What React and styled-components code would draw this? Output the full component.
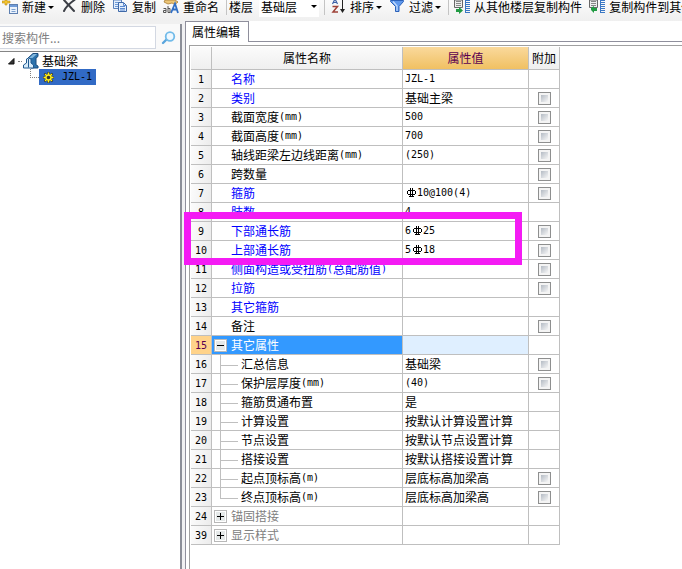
import React from "react";
import styled, { createGlobalStyle, css } from "styled-components";

const LINE = "#bfbfbf";
const FRAME = "#8f8f9c";

const GlobalStyle = createGlobalStyle`
  * { box-sizing: border-box; }
  body {
    margin: 0;
    background: #fff;
    color: #000;
    font: 12px/18px "Noto Sans CJK SC", sans-serif;
  }
  button, input, select { font: inherit; color: inherit; }
`;

const Page = styled.div`
  display: flex;
  flex-direction: column;
  height: 100vh;
  overflow: hidden;
`;

/* ---------- toolbar ---------- */

const Toolbar = styled.header`
  display: flex;
  align-items: flex-start;
  flex: none;
  height: 21px;
  padding-left: 2px;
  overflow: hidden;
  white-space: nowrap;
  background: linear-gradient(#fbfbfb, #efefef);
`;

const ToolButton = styled.button`
  display: flex;
  align-items: center;
  flex: none;
  gap: 4px;
  height: 14px;
  margin: 0 7px 0 0;
  padding: 0;
  border: 0;
  background: none;
  line-height: 14px;

  svg { display: block; flex: none; }
`;

const Arrow = styled.span`
  width: 6px;
  margin-left: -2px;
  border: solid transparent;
  border-width: 3px 3px 0;
  border-top-color: #000;
`;

const Divider = styled.span`
  flex: none;
  width: 1px;
  height: 15px;
  margin-right: ${(p) => (p.$tight ? 2 : 5)}px;
  background: #c4c4c4;
`;

const FloorLabel = styled.label`
  flex: none;
  margin-right: 6px;
  line-height: 14px;
`;

const FloorBox = styled.span`
  display: flex;
  align-items: center;
  flex: none;
  width: 60px;
  height: 17px;
  margin-right: 5px;
  padding: 0 2px 4px 2px;
  background: #fff;
`;

const FloorSelect = styled.select`
  appearance: none;
  flex: 1;
  min-width: 0;
  height: 14px;
  padding: 0;
  border: 0;
  background: none;
  line-height: 14px;
`;

/* ---------- component tree ---------- */

const Workspace = styled.div`
  display: flex;
  flex: 1;
  min-height: 0;
`;

const Sidebar = styled.aside`
  flex: none;
  width: 182px;
  padding-top: 3px;
  background: #f0f0f0;
`;

const SidebarFrame = styled.div`
  height: 100%;
  border-right: 2px solid #8b8e98;
  background: #fff;
`;

const SearchBar = styled.form`
  display: flex;
  align-items: center;
  height: 28px;
  border-bottom: 1px solid #858585;
  background: #f9f9f9;
`;

const SearchInput = styled.input`
  width: 156px;
  height: 23px;
  padding: 0 2px;
  border: 1px solid #d3d8e2;
  border-left: 0;
  background: #fff;
  outline: 0;

  &::placeholder { color: #808080; opacity: 1; }
`;

const SearchButton = styled.button`
  display: flex;
  margin-left: 5px;
  padding: 0;
  border: 0;
  background: none;
`;

const Tree = styled.ul`
  margin: 0;
  padding: 1px 0 0;
  list-style: none;
`;

const TreeRow = styled.li`
  display: flex;
  align-items: center;
  height: 16px;
  padding-left: ${(p) => (p.$child ? 30 : 8)}px;
  line-height: 16px;
`;

const RootName = styled.span`
  margin-left: 3px;
`;

const Dots = styled.span`
  width: 4px;
  margin: 0 1px 0 3px;
  border-top: 1px dotted #808080;
`;

const Elbow = styled.span`
  align-self: flex-start;
  width: 9px;
  height: 9px;
  border: dotted #808080;
  border-width: 0 0 1px 1px;
`;

const Leaf = styled.span`
  display: flex;
  align-items: center;
  gap: 8px;
  height: 16px;
  padding: 0 4px;
  background: #316ac5;
`;

/* ---------- property editor ---------- */

const Main = styled.main`
  display: flex;
  flex: 1;
  min-width: 0;
  padding-left: 3px;
  background: #f0f0f2;
`;

const Panel = styled.section`
  display: flex;
  flex-direction: column;
  flex: 1;
  min-width: 0;
  border-left: 1px solid ${FRAME};
  background: #fff;
`;

const Tabs = styled.div`
  display: flex;
  flex: none;
  height: 21px;

  &::after {
    content: "";
    flex: 1;
    border-bottom: 1px solid ${FRAME};
  }
`;

const Tab = styled.button`
  padding: 0 8px 0 6px;
  border: solid ${FRAME};
  border-width: 1px 1px 0 0;
  background: #fff;
`;

const Sheet = styled.div`
  flex: 1;
  margin: 3px 0 0 3px;
  padding: 1px 0 0 1px;
  border: solid #a0a0a0;
  border-width: 1px 0 0 1px;
`;

const TableArea = styled.div`
  position: relative;
`;

const Table = styled.table`
  width: 369px;
  border-spacing: 0;
  table-layout: fixed;
  line-height: 16px;
`;

const Col = styled.col`
  width: ${(p) => p.$w}px;
`;

const cell = css`
  padding: 0;
  border: solid ${LINE};
  border-width: 0 1px 1px 0;
  font-weight: 400;
  vertical-align: middle;
  white-space: nowrap;
`;

const HeadCell = styled.th`
  ${cell}
  height: 23px;
  background: ${(p) => (p.$active ? "linear-gradient(#fad99c, #f0c062)" : "linear-gradient(#fbfbfb, #efefef)")};
  color: ${(p) => (p.$active ? "#5a0050" : "#000")};
`;

const NumberCell = styled.th`
  ${cell}
  height: 19px;
  background: ${(p) => (p.$active ? "#ffd38a" : "linear-gradient(100deg, #fcfcfc, #ececec)")};
  color: ${(p) => (p.$active ? "#5a0050" : "#000")};
`;

const tones = { blue: "#0000ff", gray: "#808080", white: "#ffffff", black: "#000000" };

const NameCell = styled.td`
  ${cell}
  background: ${(p) => (p.$active ? "#3399ff" : "#fff")};
  color: ${(p) => tones[p.$tone]};
`;

const ValueCell = styled.td`
  ${cell}
  padding-left: 2px;
  background: ${(p) => (p.$active ? "#dfefff" : "#fff")};
`;

const CheckCell = styled.td`
  ${cell}
  text-align: center;
`;

const NameLine = styled.div`
  display: flex;
  align-items: center;
  height: 18px;
`;

const Slot = styled.span`
  display: flex;
  flex: none;
  width: 19px;
  padding-left: 2px;
`;

const Guide = styled.span`
  display: flex;
  flex-direction: column;
  flex: none;
  width: 18px;
  height: 18px;
  margin: 0 3px 0 8px;

  &::before {
    content: "";
    height: 10px;
    border: solid ${LINE};
    border-width: 0 0 1px 1px;
  }
  &::after {
    content: "";
    flex: 1;
    border-left: ${(p) => (p.$last ? 0 : 1)}px solid ${LINE};
  }
`;

const Expander = styled.button`
  display: flex;
  padding: 0;
  border: 0;
  background: none;
`;

const Check = styled.input`
  appearance: none;
  display: block;
  width: 13px;
  height: 13px;
  margin: 0 auto;
  padding: 2px;
  border: 1px solid #8e8f8f;
  background: linear-gradient(135deg, #b4bbc4, #f6f6f6) content-box, #f4f4f4;
`;

const ValueLine = styled.div`
  display: flex;
  align-items: center;
  height: 18px;
`;

const Latin = styled.span`
  display: inline-block;
  font-family: "DejaVu Sans Mono", monospace;
  font-size: 10px;
  line-height: 16px;
  vertical-align: middle;
`;

const Marker = styled.div`
  position: absolute;
  top: 165px;
  left: -7px;
  width: 338px;
  height: 53px;
  border: 7px solid #f41bf4;
  pointer-events: none;
`;

/* ---------- icons ---------- */

const NewIcon = () => (
  <svg width="16" height="14" viewBox="0 0 16 14" aria-hidden="true">
    <path d="M3 0h2v1h3v2H5v2H3V3H0V1h3z" fill="#f5c62e" stroke="#b98a18" strokeWidth=".6" />
    <rect x="7.500" y="4.500" width="8" height="9" fill="#eaf2fc" stroke="#5d7fb0" />
    <path d="M8 5h7v2H8z" fill="#6f9bd8" />
    <path d="M9.500 9.500h4M9.500 11.500h4" stroke="#7ca0cf" />
  </svg>
);
const DeleteIcon = () => (
  <svg width="16" height="14" viewBox="0 0 16 14" aria-hidden="true">
    <path d="M3 0L13 11M13.500 0C9 3 5 7 3 11" fill="none" stroke="#3d4047" strokeWidth="2" strokeLinecap="round" />
  </svg>
);
const CopyIcon = () => (
  <svg width="16" height="14" viewBox="0 0 16 14" aria-hidden="true">
    <path d="M1.500 0v8.500h8V0z" fill="#e4effc" stroke="#5c83bc" />
    <path d="M3 2.500h4M3 4.500h4M3 6.500h3" stroke="#6f9bd8" />
    <path d="M6.500 2.500h5l3 3v6h-8z" fill="#e4effc" stroke="#3f69a8" />
    <path d="M8 6.500h5M8 8.500h5M8 10h5M11.500 2.500v3h3" stroke="#5c8ad0" fill="none" />
  </svg>
);
const RenameIcon = () => (
  <svg width="16" height="14" viewBox="0 0 16 14" aria-hidden="true">
    <path d="M2 0h10l3 2-3 2.500-3-1.500-4 1-4-2z" fill="#ecc678" stroke="#a77b33" strokeWidth=".8" />
    <path d="M8 13l4-9.500 3 9.500M9.500 9.500h5" fill="none" stroke="#2f6ec4" strokeWidth="1.800" />
    <path d="M.5 8.500h2.500v4H.5v-2H3M5 6v6.500h2v-4H5" fill="none" stroke="#555" />
  </svg>
);
const SortIcon = () => (
  <svg width="16" height="14" viewBox="0 0 16 14" aria-hidden="true">
    <path d="M2.500 4l2-4h1l2 4M3.500 2.500h3" fill="none" stroke="#3e62a8" strokeWidth="1.200" />
    <path d="M2.500 6.500h5L3 12H8" fill="none" stroke="#9e4238" strokeWidth="1.500" />
    <path d="M12.500 0v11" stroke="#222" />
    <path d="M10 9h5L12.500 13z" fill="#222" />
  </svg>
);
const FilterIcon = () => (
  <svg width="16" height="14" viewBox="0 0 16 14" aria-hidden="true">
    <path d="M1.500 .5h13v1L10 6.500v5H6.500v-5L1.500 1.500z" fill="#5f98ec" stroke="#2c62b9" />
    <path d="M4 1.500L8 6v5" fill="none" stroke="#c7defc" strokeWidth="1.200" />
  </svg>
);
const FloorCopyIcon = ({ back }) => (
  <svg width="16" height="14" viewBox="0 0 16 14" aria-hidden="true">
    <path d="M.5 0v7.500h8V0z" fill="#eee" stroke="#686868" />
    <path d="M2 1.500h5M2 3.500h5M2 5.500h5" stroke="#888" />
    <path d="M11.500 0v13M11 .5h5M11 2.500h5M11 4.500h5M11 6.500h5M11 8.500h5M11 10.500h5M11 12.500h5" stroke="#3b78c4" />
    <path d={back ? "M2 8l3-2v2h3v3H5v2L2 10z" : "M2 9h3V7l4 3.500L5 14V12H2z"} fill="#219b43" />
  </svg>
);
const SearchIcon = () => (
  <svg width="15" height="14" viewBox="0 0 15 14" aria-hidden="true">
    <path d="M5.500 8.500L2 12" stroke="#5ba6dd" strokeWidth="2.400" strokeLinecap="round" />
    <circle cx="9" cy="5.500" r="4.300" fill="#eef8ff" stroke="#72bbe9" strokeWidth="1.800" />
  </svg>
);
const OpenIcon = () => (
  <svg width="7" height="7" viewBox="0 0 7 7" aria-hidden="true">
    <path d="M6 .5V6H.5z" fill="#333" stroke="#111" />
  </svg>
);
const BeamIcon = () => (
  <svg width="16" height="16" viewBox="0 0 16 16" aria-hidden="true">
    <path d="M5 5l5-4.500h5v3L13 5v7l2 1v2H8z" fill="#2c72ac" stroke="#1b4b7c" />
    <path d="M6 5l4.500-4H14L9.500 5z" fill="#83b8df" />
    <path d="M.5 15v-3L3.500 10V6l2-1 2.500 1v4l2.500 2v3z" fill="#d8ecfa" stroke="#215a90" />
    <path d="M5.500 6v8.500" stroke="#215a90" />
  </svg>
);
const GearIcon = () => (
  <svg width="11" height="11" viewBox="0 0 11 11" aria-hidden="true">
    <path d="M5.500 0v11M0 5.500h11M1.500 1.500l8 8M9.500 1.500l-8 8" stroke="#222" strokeWidth="2.200" />
    <path d="M5.500 .5v10M.5 5.500h10M2 2l7 7M9 2L2 9" stroke="#ffee18" strokeWidth="1.400" />
    <circle cx="5.500" cy="5.500" r="2.500" fill="#333" stroke="#ffee18" strokeWidth="1.400" />
  </svg>
);
const ToggleIcon = ({ open }) => (
  <svg width="13" height="13" viewBox="0 0 13 13" aria-hidden="true">
    <rect x=".5" y=".5" width="12" height="12" fill="#fff" stroke="#b8b8b8" />
    <rect x="2" y="2" width="9" height="9" fill="#e5e9e9" />
    <path d={open ? "M3 6.500h7" : "M3 6.500h7M6.500 3v7"} stroke="#000" />
  </svg>
);
const RebarIcon = () => (
  <svg width="12" height="10" viewBox="0 0 12 10" role="img" aria-label="HRB400">
    <path d="M5.500 0v9M7.500 0v9M3 2.500h7M3 6.500h7M2.500 3v3M10.500 3v3M4 8.500h5" fill="none" stroke="#000" />
  </svg>
);

/* ---------- data ---------- */

const rows = [
  { n: 1, name: "名称", tone: "blue", value: "JZL-1" },
  { n: 2, name: "类别", tone: "blue", value: "基础主梁", check: true },
  { n: 3, name: "截面宽度(mm)", value: "500", check: true },
  { n: 4, name: "截面高度(mm)", value: "700", check: true },
  { n: 5, name: "轴线距梁左边线距离(mm)", value: "(250)", check: true },
  { n: 6, name: "跨数量", value: "", check: true },
  { n: 7, name: "箍筋", tone: "blue", value: "#10@100(4)", check: true },
  { n: 8, name: "肢数", tone: "blue", value: "4" },
  { n: 9, name: "下部通长筋", tone: "blue", value: "6#25", check: true },
  { n: 10, name: "上部通长筋", tone: "blue", value: "5#18", check: true },
  { n: 11, name: "侧面构造或受扭筋(总配筋值)", tone: "blue", value: "", check: true },
  { n: 12, name: "拉筋", tone: "blue", value: "", check: true },
  { n: 13, name: "其它箍筋", tone: "blue", value: "" },
  { n: 14, name: "备注", value: "", check: true },
  { n: 15, name: "其它属性", tone: "white", value: "", group: "open", active: true },
  { n: 16, name: "汇总信息", value: "基础梁", child: true, check: true },
  { n: 17, name: "保护层厚度(mm)", value: "(40)", child: true, check: true },
  { n: 18, name: "箍筋贯通布置", value: "是", child: true },
  { n: 19, name: "计算设置", value: "按默认计算设置计算", child: true },
  { n: 20, name: "节点设置", value: "按默认节点设置计算", child: true },
  { n: 21, name: "搭接设置", value: "按默认搭接设置计算", child: true },
  { n: 22, name: "起点顶标高(m)", value: "层底标高加梁高", child: true, check: true },
  { n: 23, name: "终点顶标高(m)", value: "层底标高加梁高", child: true, last: true, check: true },
  { n: 24, name: "锚固搭接", tone: "gray", value: "", group: "closed" },
  { n: 39, name: "显示样式", tone: "gray", value: "", group: "closed" },
];

/* Latin runs use the half-width face; "#" stands for the rebar grade sign. */
const Mixed = ({ text }) =>
  (text.match(/#|[\x21-\x22\x24-\x7e]+|[^\x21-\x7e]+/g) || []).map((run, i) => {
    if (run === "#") return <RebarIcon key={i} />;
    return /^[\x21-\x7e]/.test(run) ? <Latin key={i}>{run}</Latin> : <span key={i}>{run}</span>;
  });

const PropertyRow = ({ row }) => (
  <tr>
    <NumberCell scope="row" $active={row.active}><Latin>{row.n}</Latin></NumberCell>
    <NameCell $active={row.active} $tone={row.tone || "black"}>
      <NameLine>
        {row.child ? (
          <Guide $last={row.last} />
        ) : (
          <Slot>
            {row.group && (
              <Expander type="button" aria-label={row.name} aria-expanded={row.group === "open"}>
                <ToggleIcon open={row.group === "open"} />
              </Expander>
            )}
          </Slot>
        )}
        <Mixed text={row.name} />
      </NameLine>
    </NameCell>
    <ValueCell $active={row.active}>
      <ValueLine><Mixed text={row.value} /></ValueLine>
    </ValueCell>
    <CheckCell>{row.check && <Check type="checkbox" aria-label={`附加 ${row.name}`} />}</CheckCell>
  </tr>
);

export default function App() {
  return (
    <Page>
      <GlobalStyle />
      <Toolbar>
        <ToolButton><NewIcon />新建<Arrow /></ToolButton>
        <ToolButton><DeleteIcon />删除</ToolButton>
        <ToolButton><CopyIcon />复制</ToolButton>
        <ToolButton><RenameIcon />重命名</ToolButton>
        <Divider $tight />
        <FloorLabel htmlFor="floor">楼层</FloorLabel>
        <FloorBox>
          <FloorSelect id="floor" defaultValue="基础层">
            <option>基础层</option>
          </FloorSelect>
          <Arrow />
        </FloorBox>
        <Divider />
        <ToolButton><SortIcon />排序<Arrow /></ToolButton>
        <ToolButton><FilterIcon />过滤<Arrow /></ToolButton>
        <Divider />
        <ToolButton><FloorCopyIcon />从其他楼层复制构件</ToolButton>
        <ToolButton><FloorCopyIcon back />复制构件到其他楼层</ToolButton>
      </Toolbar>
      <Workspace>
        <Sidebar>
          <SidebarFrame>
            <SearchBar onSubmit={(e) => e.preventDefault()}>
              <SearchInput type="text" placeholder="搜索构件..." aria-label="搜索构件" />
              <SearchButton aria-label="搜索"><SearchIcon /></SearchButton>
            </SearchBar>
            <Tree>
              <TreeRow>
                <OpenIcon />
                <Dots />
                <BeamIcon />
                <RootName>基础梁</RootName>
              </TreeRow>
              <TreeRow $child>
                <Elbow />
                <Leaf><GearIcon /><Latin>JZL-1</Latin></Leaf>
              </TreeRow>
            </Tree>
          </SidebarFrame>
        </Sidebar>
        <Main>
          <Panel>
            <Tabs><Tab type="button">属性编辑</Tab></Tabs>
            <Sheet>
              <TableArea>
                <Table>
                  <colgroup>
                    <Col $w={21} /><Col $w={191} /><Col $w={126} /><Col $w={31} />
                  </colgroup>
                  <thead>
                    <tr>
                      <HeadCell />
                      <HeadCell scope="col">属性名称</HeadCell>
                      <HeadCell scope="col" $active>属性值</HeadCell>
                      <HeadCell scope="col">附加</HeadCell>
                    </tr>
                  </thead>
                  <tbody>
                    {rows.map((row) => <PropertyRow key={row.n} row={row} />)}
                  </tbody>
                </Table>
                <Marker />
              </TableArea>
            </Sheet>
          </Panel>
        </Main>
      </Workspace>
    </Page>
  );
}
